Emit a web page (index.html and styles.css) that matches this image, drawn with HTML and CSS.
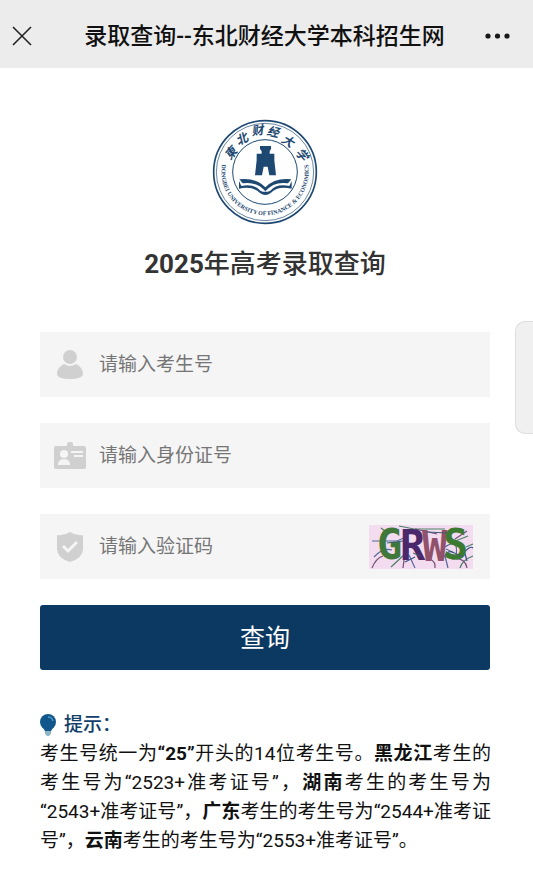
FILE: index.html
```
<!DOCTYPE html>
<html lang="zh-CN">
<head>
    <meta charset="UTF-8">
    <meta name="viewport" content="width=device-width, initial-scale=1.0">
    <title>录取查询--东北财经大学本科招生网</title>
    <link rel="stylesheet" href="styles.css">
</head>
<body>
    <header class="nav-bar">
        <button type="button" class="nav-button nav-close" aria-label="关闭">
            <svg width="20" height="20" viewBox="0 0 20 20" fill="none" stroke="#222" stroke-width="1.6">
                <path d="M1 1 L19 19 M19 1 L1 19"/>
            </svg>
        </button>
        <div class="nav-title">录取查询--东北财经大学本科招生网</div>
        <button type="button" class="nav-button" aria-label="更多">
            <svg width="26" height="6" viewBox="0 0 26 6" fill="#181818">
                <circle cx="3" cy="3" r="2.6"/>
                <circle cx="12.5" cy="3" r="2.6"/>
                <circle cx="22" cy="3" r="2.6"/>
            </svg>
        </button>
    </header>

    <main class="page">
        <svg class="school-logo" viewBox="21 21 318 318" role="img" aria-label="东北财经大学">
            <defs>
                <path id="ringBottom" d="M52 151 A131 131 0 1 0 308 151"/>
            </defs>
            <g fill="none" stroke="#1d4872">
                <circle cx="180" cy="180" r="154" stroke-width="5"/>
                <circle cx="180" cy="180" r="146" stroke-width="2"/>
                <circle cx="180" cy="180" r="97" stroke-width="3"/>
            </g>
            <g class="logo-name">
                <text transform="translate(78 124) rotate(-50)">東</text>
                <text transform="translate(111 82) rotate(-28)">北</text>
                <text transform="translate(157 56) rotate(-8)">财</text>
                <text transform="translate(204 60) rotate(12)">经</text>
                <text transform="translate(248 88) rotate(32)">大</text>
                <text transform="translate(290 128) rotate(50)">学</text>
            </g>
            <text class="logo-english"><textPath href="#ringBottom" startOffset="50%">DONGBEI UNIVERSITY OF FINANCE &amp; ECONOMICS</textPath></text>
            <g fill="#1d4872">
                <path d="M165 102 H198 V111 L194 118 V125 H208 V145 L213 190 H193 L188 164 H176 L171 190 H150 L155 145 V125 H170 V118 L165 111 Z"/>
                <path d="M103 202 Q152 196 181 226 Q210 196 259 202 L249 214 Q207 207 181 238 Q155 207 113 214 Z"/>
                <path d="M102 207 L109 222 Q146 214 166 236 Q181 243 196 236 Q216 214 253 222 L260 207 V230 Q218 221 197 243 Q181 255 165 243 Q144 221 102 230 Z"/>
            </g>
        </svg>

        <h1 class="page-title"><b>2025</b>年高考录取查询</h1>

        <form class="query-form">
            <div class="field">
                <label class="field-icon" for="examNo" aria-label="考生号">
                    <svg width="32" height="32" viewBox="0 0 32 32" fill="#d0d0d0">
                        <circle cx="16" cy="8" r="7"/>
                        <path d="M3 25 C3 20 6 17 10 15 Q16 19 22 15 C26 17 29 20 29 25 Q29 30 16 30 Q3 30 3 25 Z"/>
                    </svg>
                </label>
                <input type="text" id="examNo" class="field-input" placeholder="请输入考生号">
            </div>

            <div class="field">
                <label class="field-icon" for="idNo" aria-label="身份证号">
                    <svg width="32" height="32" viewBox="0 0 32 32">
                        <path fill="#d0d0d0" d="M2 6 H13 V4 Q13 2 15 2 H17 Q19 2 19 4 V6 H30 Q32 6 32 8 V27 Q32 29 30 29 H2 Q0 29 0 27 V8 Q0 6 2 6 Z"/>
                        <g fill="#f5f5f5">
                            <circle cx="10" cy="14" r="4"/>
                            <path d="M4 25 Q4 19 10 19 Q16 19 16 25 Z"/>
                            <path d="M17 11 H29 V13 H17 Z M20 15 H29 V17 H20 Z"/>
                        </g>
                    </svg>
                </label>
                <input type="text" id="idNo" class="field-input" placeholder="请输入身份证号">
            </div>

            <div class="field">
                <label class="field-icon" for="verifyCode" aria-label="验证码">
                    <svg width="32" height="32" viewBox="0 0 32 32">
                        <path fill="#d0d0d0" d="M16 1 Q22 5 29 4 V18 Q29 27 16 31 Q3 27 3 18 V4 Q10 5 16 1 Z"/>
                        <path fill="none" stroke="#f5f5f5" stroke-width="3" d="M9 15 L14 20 L23 11"/>
                    </svg>
                </label>
                <input type="text" id="verifyCode" class="field-input" placeholder="请输入验证码">
                <button type="button" class="captcha" aria-label="换一张验证码">
                    <svg width="104" height="44" viewBox="0 0 104 44">
                        <rect width="104" height="44" fill="#f3dcef"/>
                        <g fill="none" stroke-width="1.2">
                            <path stroke="#536a9a" d="M3 16 H28 L37 12 M5 32 Q14 22 23 25 M40 30 L46 43 M76 22 Q90 12 87 31 M76 31 L79 43"/>
                            <path stroke="#4d8065" d="M12 3 L20 9 M30 1 L45 4 H76 M22 42 L36 29 M84 17 L99 11 M97 22 L104 19 M91 43 Q93 35 104 31"/>
                            <path stroke="#735078" d="M3 43 Q7 33 14 31 M35 35 L34 43 M61 34 Q67 37 66 43 M83 34 Q96 32 98 43 M86 14 L98 6 M46 4 L68 9"/>
                            <path stroke="#3b4b87" d="M36 37 L46 32 M75 32 Q79 24 85 28 M94 29 Q101 20 104 23 M95 25 L98 36"/>
                        </g>
                        <g class="captcha-text">
                            <text x="8" y="34" fill="#40783b">G</text>
                            <text x="31" y="35" fill="#4b276b">R</text>
                            <text x="53" y="36" fill="#91516b">W</text>
                            <text x="74" y="34" fill="#3c7a32">S</text>
                        </g>
                        <path fill="none" stroke="#395d72" d="M18 18 L34 16 M58 7 L78 8 M77 24 L94 32 M44 28 L51 31"/>
                    </svg>
                </button>
            </div>

            <button type="submit" class="submit-button">查询</button>
        </form>

        <section class="tips">
            <h2 class="tips-title">
                <svg width="16" height="22" viewBox="0 0 16 22">
                    <circle cx="8" cy="8" r="8" fill="#12578c"/>
                    <path fill="#12578c" d="M2 12 H14 L11 17 H5 Z"/>
                    <path fill="none" stroke="#4f96c3" stroke-width="1.4" d="M8 3 Q12 3 13 7"/>
                    <path fill="#91b5c8" d="M5 17 H11 V20 L9 22 H7 L5 20 Z"/>
                </svg>
                提示：
            </h2>
            <p class="tips-text">考生号统一为<b>“25”</b>开头的14位考生号。<b>黑龙江</b>考生的考生号为“2523+准考证号”，<b>湖南</b>考生的考生号为“2543+准考证号”，<b>广东</b>考生的考生号为“2544+准考证号”，<b>云南</b>考生的考生号为“2553+准考证号”。</p>
        </section>
    </main>

    <button type="button" class="side-handle" aria-label="展开侧栏"></button>
</body>
</html>
```
FILE: styles.css
```
* {
    margin: 0;
    padding: 0;
    box-sizing: border-box;
}

body {
    font-family: Roboto, "Noto Sans CJK SC", sans-serif;
    background: #fff;
    color: #111;
}

button {
    border: none;
    background: none;
    font-family: inherit;
    cursor: pointer;
}

svg {
    display: block;
}

.nav-bar {
    display: flex;
    align-items: center;
    justify-content: space-between;
    height: 68px;
    padding: 4px 22px 0 12px;
    background: #ececec;
}

.nav-close {
    width: 32px;
}

.nav-title {
    font-size: 23px;
    font-weight: 500;
    line-height: 33px;
    white-space: nowrap;
}

.page {
    padding: 51px 43px 20px 40px;
}

.school-logo {
    width: 106px;
    height: 106px;
    margin: 0 auto;
}

.logo-name {
    font-size: 36px;
    font-style: italic;
    font-weight: bold;
    fill: #1d4872;
    text-anchor: middle;
    dominant-baseline: central;
}

.logo-english {
    font-family: "Liberation Serif", serif;
    font-size: 18px;
    font-weight: bold;
    fill: #1d4872;
    text-anchor: middle;
}

.page-title {
    margin-top: 21px;
    font-size: 26px;
    font-weight: 500;
    line-height: 36px;
    color: #333;
    text-align: center;
}

.query-form {
    display: flex;
    flex-direction: column;
    gap: 26px;
    margin-top: 50px;
}

.field {
    display: flex;
    align-items: center;
    height: 65px;
    padding: 0 17px 0 14px;
    background: #f5f5f5;
}

.field-icon {
    flex: none;
    margin-right: 13px;
}

.field-input {
    flex: 1;
    min-width: 0;
    height: 100%;
    border: none;
    outline: none;
    background: transparent;
    font-family: inherit;
    font-size: 19px;
    color: #333;
}

.field-input::placeholder {
    color: #757575;
}

.captcha {
    flex: none;
}

.captcha svg {
    overflow: visible;
}

.captcha-text {
    font-family: "DejaVu Sans Mono", monospace;
    font-size: 42px;
    font-weight: bold;
}

.submit-button {
    height: 65px;
    padding-bottom: 4px;
    border-radius: 3px;
    background: #0b3961;
    color: #fff;
    font-size: 25px;
}

.tips {
    margin: 40px -1px 0 0;
    font-size: 19px;
    line-height: 29px;
}

.tips-title {
    display: flex;
    align-items: center;
    gap: 8px;
    font-size: 19px;
    font-weight: 500;
    color: #123f6b;
}

.tips-text {
    text-align: justify;
}

.side-handle {
    position: absolute;
    top: 321px;
    right: 0;
    width: 18px;
    height: 113px;
    border: 1px solid #ddd;
    border-right: none;
    border-radius: 10px 0 0 10px;
    background: #f0f0f0;
}
```
